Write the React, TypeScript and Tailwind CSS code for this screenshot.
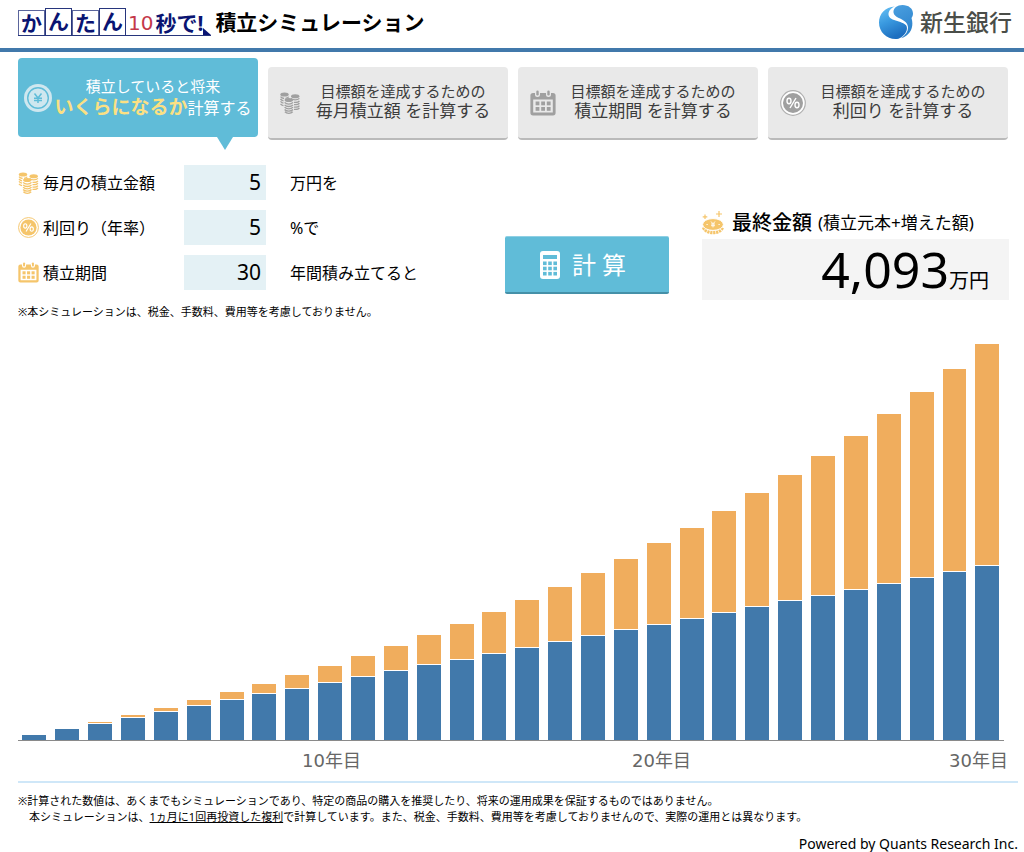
import { useState, type ReactNode } from "react";
import { clsx } from "clsx";

type IconProps = { className?: string };

function CoinsIcon({ className }: IconProps) {
  return (
    <svg viewBox="0 0 20 22" className={className} fill="none" stroke="currentColor" strokeWidth="1.3" aria-hidden="true">
      <ellipse cx="4.5" cy="2.4" rx="4.2" ry="2" fill="currentColor" stroke="none" />
      <ellipse cx="15.2" cy="4.2" rx="4.2" ry="2" fill="currentColor" stroke="none" />
      <ellipse cx="8.8" cy="8" rx="4.2" ry="2" fill="currentColor" stroke="none" />
      <path d="M.5 4.6q1.2 1.6 3.6 1.9M.5 7q1 1.4 3 1.8M.5 9.4q1 1.4 3 1.8M.5 11.8q1 1.4 3 1.8M5.5 6.3q2.4-.2 3.2-1.6" />
      <path d="M11 6.4q1.4 1.5 4.2 1.5t4.2-1.5M14 10.3q4.4.2 5.4-1.5M14 12.7q4.4.2 5.4-1.5M14 15.1q4.4.2 5.4-1.5M14 17.3q4.4.2 5.4-1.5" />
      <path d="M4.6 10.4q1.4 1.7 4.2 1.7t4.2-1.7M4.6 12.8q1.4 1.7 4.2 1.7t4.2-1.7M4.6 15.2q1.4 1.7 4.2 1.7t4.2-1.7M4.6 17.5q1.4 1.7 4.2 1.7t4.2-1.7M4.9 19.8q1.4 1.5 3.9 1.5t3.9-1.5" />
    </svg>
  );
}

function CalendarIcon({ className }: IconProps) {
  return (
    <svg viewBox="0 0 26 26" className={className} aria-hidden="true">
      <path
        fill="currentColor"
        fillRule="evenodd"
        d="M3 3h2v1.5a2.5 2.5 0 0 0 5 0V3h6v1.5a2.5 2.5 0 0 0 5 0V3h2a2.6 2.6 0 0 1 2.6 2.6v17.2a2.6 2.6 0 0 1-2.6 2.6H3A2.6 2.6 0 0 1 .4 22.8V5.6A2.6 2.6 0 0 1 3 3zM3.2 9.5v13h19.6v-13z"
      />
      <rect x="6.3" y=".5" width="2.4" height="5" rx="1.2" fill="currentColor" />
      <rect x="17.3" y=".5" width="2.4" height="5" rx="1.2" fill="currentColor" />
      {[11.5, 17].map((y) =>
        [5.6, 11.2, 16.8].map((x) => <rect key={`${x}-${y}`} x={x} y={y} width="3.8" height="3.8" fill="currentColor" />)
      )}
    </svg>
  );
}

function PercentIcon({ className, rim }: IconProps & { rim: string }) {
  return (
    <svg viewBox="0 0 26 26" className={className} fill="none" aria-hidden="true">
      <circle cx="13" cy="13" r="12.3" fill="#fff" stroke={rim} strokeWidth="1.2" />
      <circle cx="13" cy="13" r="10" fill="currentColor" />
      <g stroke="#fff" strokeWidth="1.4">
        <ellipse cx="9" cy="11" rx="2" ry="2.7" />
        <ellipse cx="17" cy="15" rx="2" ry="2.7" />
        <path d="M16 8l-6 10" />
      </g>
    </svg>
  );
}

function YenIcon({ className }: IconProps) {
  return (
    <svg viewBox="0 0 28 28" className={className} fill="none" aria-hidden="true">
      <circle cx="14" cy="14" r="14" fill="#cfe7ef" />
      <circle cx="14" cy="14" r="10.3" stroke="#60bcd8" strokeWidth="1.4" />
      <path d="M10.5 9.500l3.500 4.500 3.500-4.500M14 14v5M10 14.200h8M10 16.600h8" stroke="#60bcd8" strokeWidth="1.5" />
    </svg>
  );
}

function CalculatorIcon({ className }: IconProps) {
  return (
    <svg viewBox="0 0 20 28" className={className} aria-hidden="true">
      <rect width="20" height="28" rx="3" fill="#fff" />
      <rect x="3" y="4" width="14" height="4" fill="#60bcd8" />
      {[10.5, 15.7, 20.9].map((y) =>
        [3, 8.2, 13.4].map((x) => <rect key={`${x}-${y}`} x={x} y={y} width="3.6" height="3.6" fill="#60bcd8" />)
      )}
    </svg>
  );
}

function ShiningCoinIcon({ className }: IconProps) {
  return (
    <svg viewBox="0 0 22 24" className={className} fill="none" stroke="currentColor" aria-hidden="true">
      <path d="M1.500 16.500A9.600 6 0 0 0 20.500 16.500" strokeWidth="3.200" strokeDasharray="2.200 .7" />
      <ellipse cx="11" cy="13.500" rx="10.400" ry="5.900" fill="currentColor" stroke="#fff" strokeWidth="1" />
      <path d="M17 0v6M14 3h6M3 3.500v4.600M.7 5.800h4.600" strokeWidth="1.200" />
      <path d="M9 10.500l2 2.300 2-2.300M11 12.800v3.600M9 13h4M9 14.700h4" stroke="#fff" strokeWidth=".9" />
      <path d="M4.500 13.500h1.200M16.500 13.500h1.200" stroke="#fff" strokeWidth="1.200" />
    </svg>
  );
}

function BankLogo({ className }: IconProps) {
  return (
    <svg viewBox="0 0 34 34" className={className} aria-hidden="true">
      <defs>
        <linearGradient id="wave" x1="0" y1="0" x2=".4" y2="1">
          <stop offset="0" stopColor="#6cc3f5" />
          <stop offset=".5" stopColor="#3a9ae0" />
          <stop offset="1" stopColor="#1e6fc0" />
        </linearGradient>
        <linearGradient id="drop" x1="0" y1="0" x2=".3" y2="1">
          <stop offset="0" stopColor="#4ba0e0" />
          <stop offset="1" stopColor="#2c82cc" />
        </linearGradient>
      </defs>
      <path
        fill="url(#wave)"
        d="M16 1.500C6 2 0 9 0 17.500 0 27 7.500 34 16.500 34c1 0 2-.1 3-.3 5.800-2.500 9.300-7.500 8.300-12C26.300 15.500 10 17 9.500 9.500 9.300 5.800 12 3 16 1.500z"
      />
      <path
        fill="url(#drop)"
        d="M14.500 7.500C14 3.500 17.800 0 23.500 0 29.500 0 34 3.500 34 8.500c0 1.800-.6 3.300-1.500 4.400C34.800 20 33 30 22 33.200 29.500 28.500 31 21.500 26.500 17 22.500 13 15.200 12.500 14.500 7.500z"
      />
    </svg>
  );
}

const tabs = [
  { icon: <CoinsIcon className="h-[22px] w-5" />, target: "毎月積立額" },
  { icon: <CalendarIcon className="size-[26px]" />, target: "積立期間" },
  { icon: <PercentIcon className="size-[26px]" rim="#b0b0b0" />, target: "利回り" },
];

// deposits are made at the start of each month and compounded monthly
function simulate(monthly: number, rate: number, years: number) {
  const r = Math.pow(1 + rate / 100, 1 / 12) - 1;
  return Array.from({ length: years }, (_, i) => {
    const months = (i + 1) * 12;
    const principal = monthly * months;
    const total = r === 0 ? principal : (monthly * (Math.pow(1 + r, months) - 1) * (1 + r)) / r;
    return { year: i + 1, principal, total };
  });
}

type FieldProps = {
  id: string;
  icon: ReactNode;
  label: string;
  unit: string;
  value: string;
  onChange: (value: string) => void;
};

function Field({ id, icon, label, unit, value, onChange }: FieldProps) {
  return (
    <div className="flex items-center text-base">
      <label htmlFor={id} className="flex w-[166px] items-center gap-1 whitespace-nowrap">
        <span className="text-[#f5c56b]">{icon}</span>
        {label}
      </label>
      <input
        id={id}
        value={value}
        onChange={(e) => onChange(e.target.value)}
        className="h-[35px] w-[82px] bg-[#e4f1f5] pr-[5px] pb-[2px] text-right text-[21px]"
      />
      <span className="pl-6">{unit}</span>
    </div>
  );
}

function Header() {
  return (
    <header className="flex h-[52px] items-center justify-between border-b-4 border-[#4179ab] pr-3 pb-1 pl-[18px]">
      <h1 className="flex items-center gap-1 text-[21px] leading-6 font-bold">
        <span className="flex items-end border-b border-[#27357c] text-[#0a1472]">
          {["か", "ん", "た", "ん"].map((kana, i) => (
            <span
              key={i}
              className={clsx("w-[27px] border border-b-0 border-[#5b659c] text-center", i % 2 ? "h-[27px] border-[#27357c]" : "h-[25px]")}
            >
              {kana}
            </span>
          ))}
          <span className="px-[2px] font-['DejaVu_Sans'] text-[20px] font-normal text-[#c4384a]">10</span>
          <span>秒で!</span>
          <svg viewBox="0 0 8 7" className="h-[7px] w-2" aria-hidden="true">
            <path d="M0 0l8 7H0z" fill="#0a1472" />
          </svg>
        </span>
        <span>積立シミュレーション</span>
      </h1>
      <div className="flex items-center gap-[7px] text-[23px] leading-8 font-medium text-[#4a4d48]">
        <BankLogo className="size-[34px]" />
        新生銀行
      </div>
    </header>
  );
}

function Tabs() {
  return (
    <nav className="grid grid-cols-4 items-start gap-[10px] pt-[6px] pr-4 pl-[18px] whitespace-nowrap">
      <button className="relative flex h-[79px] items-center justify-center gap-[2px] rounded-sm bg-[#60bcd8] text-white">
        <YenIcon className="size-7 shrink-0" />
        <span className="text-[15px] leading-5">
          積立していると将来
          <br />
          <strong className="text-[19px] text-[#fbe083]">いくらになるか</strong>
          <span className="text-base">計算する</span>
        </span>
        <svg viewBox="0 0 16 13" className="absolute top-full left-[199px] h-[13px] w-4" aria-hidden="true">
          <path d="M0 0h16L8 13z" fill="#60bcd8" />
        </svg>
      </button>
      {tabs.map((tab) => (
        <button
          key={tab.target}
          className="mt-[9px] flex h-[73px] items-center rounded-sm border-b-2 border-[#bababa] bg-[#e9e9e9] pl-3 text-[#3c3c3c]"
        >
          <span className="flex w-[26px] text-[#a0a0a0]">{tab.icon}</span>
          <span className="flex-1 pr-2 pb-1 text-[15px] leading-5">
            目標額を達成するための
            <br />
            <span className="text-[17px]">{tab.target} を計算する</span>
          </span>
        </button>
      ))}
    </nav>
  );
}

export default function App() {
  const [monthly, setMonthly] = useState("5");
  const [rate, setRate] = useState("5");
  const [years, setYears] = useState("30");
  const [rows, setRows] = useState(() => simulate(5, 5, 30));

  const max = rows[rows.length - 1].total;

  return (
    <div className="bg-white font-['Noto_Sans','Noto_Sans_CJK_JP',sans-serif] text-black">
      <Header />
      <Tabs />

      <form
        className="flex items-end pt-[25px] pr-[15px] pl-[18px]"
        onSubmit={(e) => {
          e.preventDefault();
          const count = Math.floor(Number(years));
          if (count > 0) setRows(simulate(Number(monthly), Number(rate), count));
        }}
      >
        <div className="flex-1">
          <div className="space-y-[10px]">
            <Field
              id="monthly"
              icon={<CoinsIcon className="h-[22px] w-[21px]" />}
              label="毎月の積立金額"
              unit="万円を"
              value={monthly}
              onChange={setMonthly}
            />
            <Field
              id="rate"
              icon={<PercentIcon className="size-[21px]" rim="#f5c56b" />}
              label="利回り（年率）"
              unit="%で"
              value={rate}
              onChange={setRate}
            />
            <Field
              id="years"
              icon={<CalendarIcon className="size-[21px]" />}
              label="積立期間"
              unit="年間積み立てると"
              value={years}
              onChange={setYears}
            />
          </div>
          <p className="pt-[14px] text-[11px] leading-4">
            ※本シミュレーションは、税金、手数料、費用等を考慮しておりません。
          </p>
        </div>
        <button className="mb-[26px] flex h-[58px] w-[164px] items-center justify-center gap-3 rounded-xs border-t border-b-2 border-t-[#8fd0e4] border-b-[#4590a8] bg-[#60bcd8] pr-2 text-[24px] text-white">
          <CalculatorIcon className="h-7 w-5" />
          計 算
        </button>
        <div className="mb-5 ml-[33px] w-[307px]">
          <h2 className="flex items-center text-[17px] leading-8 whitespace-nowrap">
            <ShiningCoinIcon className="mr-2 h-6 w-[22px] text-[#f5c56b]" />
            <span className="mr-[6px] text-[20px] font-medium">最終金額</span>
            (積立元本+増えた額)
          </h2>
          <output className="flex h-[61px] items-baseline justify-end bg-[#f4f4f4] pr-5 text-[50px] leading-[60px]">
            {Math.floor(max).toLocaleString("en-US")}
            <span className="text-[20px]">万円</span>
          </output>
        </div>
      </form>

      <section className="pt-[23px] pr-5 pl-[18px]">
        <div className="flex h-[398px] items-end border-b border-[#8a8a8a]">
          {rows.map((row) => (
            <div key={row.year} className="flex h-full flex-1 flex-col items-center justify-end">
              <div
                className="w-[73%] border-t border-white bg-[#f0ad5d]"
                style={{ height: `${((row.total - row.principal) / max) * 100}%` }}
              />
              <div
                className="w-[73%] border-t border-white bg-[#4179ab]"
                style={{ height: `${(row.principal / max) * 100}%` }}
              />
            </div>
          ))}
        </div>
        <div className="-mr-1 flex h-10 pt-[6px] text-[18px] leading-7 text-[#666]">
          {rows.map((row) => (
            <div key={row.year} className={clsx("flex w-0 flex-1", row.year === rows.length ? "justify-end" : "justify-center")}>
              {row.year % 10 === 0 && (
                <span className="font-['DejaVu_Sans','Noto_Sans_CJK_JP',sans-serif] whitespace-nowrap">{row.year}年目</span>
              )}
            </div>
          ))}
        </div>
      </section>

      <footer className="pr-[6px] pl-[18px]">
        <div className="border-t-2 border-[#cfe7f8] pt-[10px] text-[11px] leading-4">
          <p>
            ※計算された数値は、あくまでもシミュレーションであり、特定の商品の購入を推奨したり、将来の運用成果を保証するものではありません。
          </p>
          <p className="pl-[11px]">
            本シミュレーションは、<a href="#compound" className="underline">1ヵ月に1回再投資した複利</a>
            で計算しています。また、税金、手数料、費用等を考慮しておりませんので、実際の運用とは異なります。
          </p>
        </div>
        <p className="pt-[9px] text-right text-[14px] leading-5">Powered by Quants Research Inc.</p>
      </footer>
    </div>
  );
}
